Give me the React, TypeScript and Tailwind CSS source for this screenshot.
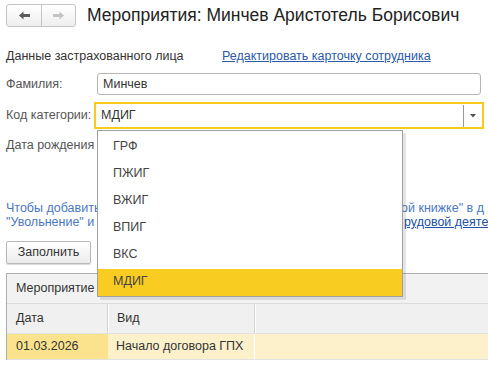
import React from "react";

function NavArrow({ dir, color }: { dir: "left" | "right"; color: string }) {
  return (
    <svg width="11" height="9" viewBox="0 0 11 9">
      {dir === "left" ? (
        <g fill={color}>
          <polygon points="0,4.5 4.5,0.5 4.5,8.5" />
          <rect x="4" y="3" width="7" height="3" />
        </g>
      ) : (
        <g fill={color}>
          <polygon points="11,4.5 6.5,0.5 6.5,8.5" />
          <rect x="0" y="3" width="7" height="3" />
        </g>
      )}
    </svg>
  );
}

const items = ["ГРФ", "ПЖИГ", "ВЖИГ", "ВПИГ", "ВКС", "МДИГ"];

export default function App() {
  return (
    <div
      className="relative w-[488px] h-[382px] overflow-hidden bg-white text-[12.5px] text-[#333]"
      style={{ fontFamily: '"Liberation Sans", Arial, sans-serif' }}
    >
      {/* header */}
      <div className="flex items-center pt-[4px] pl-[6px]">
        <div className="flex h-[23px] w-[70px] rounded-[3px] border border-[#c6c6c6] bg-gradient-to-b from-white to-[#eeeeee]">
          <div className="flex w-[35px] items-center justify-center border-r border-[#c6c6c6]">
            <NavArrow dir="left" color="#5a5a5a" />
          </div>
          <div className="flex flex-1 items-center justify-center">
            <NavArrow dir="right" color="#c4c4c4" />
          </div>
        </div>
        <div className="ml-[11px] whitespace-nowrap text-[17.5px] leading-[23px] text-[#222]">
          Мероприятия: Минчев Аристотель Борисович
        </div>
      </div>

      {/* insured person row */}
      <div className="mt-[21px] flex h-[16px] items-center whitespace-nowrap pl-[6px] leading-[16px]">
        <span className="w-[216px] shrink-0 text-[#333]">Данные застрахованного лица</span>
        <span className="text-[#2a5aa8] underline">Редактировать карточку сотрудника</span>
      </div>

      {/* surname */}
      <div className="mt-[9px] flex items-center pl-[6px]">
        <span className="w-[91px] shrink-0 whitespace-nowrap text-[#555]">Фамилия:</span>
        <div className="flex h-[22px] w-[384px] items-center rounded-[3px] border border-[#b5b5b5] pl-[5px] text-[#333]">
          Минчев
        </div>
      </div>

      {/* category */}
      <div className="mt-[7px] flex items-center pl-[6px]">
        <span className="w-[88px] shrink-0 whitespace-nowrap text-[#555]">Код категории:</span>
        <div className="flex h-[27px] w-[390px] shrink-0 items-center border-2 border-[#f7cb1d] bg-white">
          <span className="flex-1 pl-[5px] text-[#333]">МДИГ</span>
          <div className="h-[22px] w-px bg-[#9a9a9a]" />
          <div className="flex w-[18px] items-center justify-center">
            <svg width="6" height="4" viewBox="0 0 6 4">
              <polygon points="0,0 6,0 3,3.5" fill="#555" />
            </svg>
          </div>
        </div>
      </div>

      {/* birth date */}
      <div className="mt-[8px] flex h-[16px] items-center pl-[6px] text-[#555]">Дата рождения</div>

      {/* hint */}
      <div className="mt-[48px] pl-[6px] text-[#4a78c0] leading-[14px]">
        <div className="flex whitespace-nowrap">
          <span className="w-[395px] shrink-0 overflow-hidden">
            Чтобы добавить мероприятие, заполните сведения в разделе "Сведения о трудов
          </span>
          <span>ой книжке" в д</span>
        </div>
        <div className="flex whitespace-nowrap">
          <span className="w-[398px] shrink-0 overflow-hidden">
            "Увольнение" и другие, используйте ссылку "Сведения о т
          </span>
          <span className="text-[#2150a8] underline">рудовой деяте</span>
        </div>
      </div>

      {/* fill button */}
      <div className="mt-[12px] pl-[6px]">
        <button className="flex h-[23px] w-[85px] items-center justify-center rounded-[2px] border border-[#b8b8b8] bg-gradient-to-b from-white to-[#ececec] text-[#333] shadow-[0_1px_1px_rgba(0,0,0,0.15)]">
          Заполнить
        </button>
      </div>

      {/* table */}
      <div className="ml-[6px] mt-[9px] border-l border-t border-[#adadad]">
        <div className="flex h-[29px] items-center bg-[#f2f2f2] pl-[9px] text-[#333]">Мероприятие</div>
        <div className="flex h-[30px] border-t border-[#dcdcdc] bg-[#f0f0f0]">
          <div className="flex w-[101px] items-center border-r border-[#d4d4d4] pl-[9px] shadow-[1px_0_0_#ffffff]">Дата</div>
          <div className="ml-px flex w-[146px] items-center border-r border-[#d4d4d4] pl-[8px] shadow-[1px_0_0_#ffffff]">Вид</div>
          <div className="flex-1" />
        </div>
        <div className="flex h-[27px] border-y border-[#e2e2e2]">
          <div className="flex w-[101px] items-center bg-[#fbe38e] pl-[9px] text-[#333]">01.03.2026</div>
          <div className="flex w-[147px] items-center whitespace-nowrap border-r border-white bg-[#fdf1cc] pl-[8px] text-[#333]">
            Начало договора ГПХ
          </div>
          <div className="flex-1 bg-[#fdf1cc]" />
        </div>
      </div>

      {/* dropdown list */}
      <div className="absolute left-[97px] top-[130px] w-[306px] border border-[#a0a0a0] bg-white pt-[3px] shadow-[3px_3px_0_rgba(0,0,0,0.1)]">
        {items.map((it) => (
          <div
            key={it}
            className={
              it === "МДИГ"
                ? "flex h-[27px] items-center bg-[#f9cc22] pb-[3px] pl-[15px] text-[#444]"
                : "flex h-[27px] items-center pb-[3px] pl-[15px] text-[#444]"
            }
          >
            {it}
          </div>
        ))}
      </div>
    </div>
  );
}
